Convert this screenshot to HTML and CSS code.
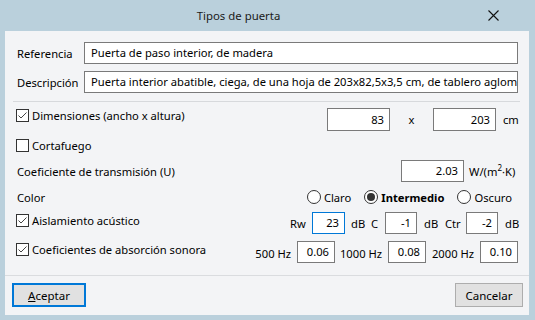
FILE: index.html
```html
<!DOCTYPE html>
<html lang="es">
<head>
  <meta charset="UTF-8" />
  <title>Tipos de puerta</title>
  <link rel="stylesheet" href="styles.css">
</head>
<body>
  <div class="window">
    <div class="titlebar">
      <div class="title">Tipos de puerta</div>
      <div class="close">
        <svg width="11" height="11" viewBox="0 0 11 11"><path d="M0.5 0.5L10.5 10.5M10.5 0.5L0.5 10.5" stroke="#111" stroke-width="1.1" fill="none"/></svg>
      </div>
    </div>

    <div class="client">
      <div class="body">
        <div class="row text-row">
          <span class="label">Referencia</span>
          <div class="field wide">Puerta de paso interior, de madera</div>
        </div>
        <div class="row text-row next">
          <span class="label">Descripción</span>
          <div class="field wide">Puerta interior abatible, ciega, de una hoja de 203x82,5x3,5 cm, de tablero aglomerado</div>
        </div>

        <div class="sep"></div>

        <div class="row dims">
          <label class="check lift-9">
            <span class="box"><svg width="11" height="11" viewBox="0 0 11 11"><path d="M1.5 5.5L4 8L9.5 2.5" stroke="#444" stroke-width="1" fill="none"/></svg></span>
            Dimensiones (ancho x altura)
          </label>
          <div class="group">
            <div class="field num w63">83</div>
            <span class="times">x</span>
            <div class="field num w63">203</div>
            <span class="unit">cm</span>
          </div>
        </div>

        <div class="row plain">
          <label class="check">
            <span class="box"></span>
            Cortafuego
          </label>
        </div>

        <div class="row trans">
          <span>Coeficiente de transmisión (U)</span>
          <div class="group">
            <div class="field num w63">2.03</div>
            <span class="unit-w">W/(m<sup>2</sup>·K)</span>
          </div>
        </div>

        <div class="row color">
          <span>Color</span>
          <div class="group radios">
            <span class="radio"><span class="dot"></span>Claro</span>
            <span class="radio on"><span class="dot"></span><b>Intermedio</b></span>
            <span class="radio"><span class="dot"></span>Oscuro</span>
          </div>
        </div>

        <div class="row acoustic">
          <label class="check lift-6">
            <span class="box"><svg width="11" height="11" viewBox="0 0 11 11"><path d="M1.5 5.5L4 8L9.5 2.5" stroke="#444" stroke-width="1" fill="none"/></svg></span>
            Aislamiento acústico
          </label>
          <div class="group">
            <span class="cell rw">Rw</span>
            <div class="field num w33 focus">23</div>
            <span class="cell db">dB</span>
            <span class="cell c">C</span>
            <div class="field num w32">-1</div>
            <span class="cell db2">dB</span>
            <span class="cell ctr">Ctr</span>
            <div class="field num w32">-2</div>
            <span class="cell db-last">dB</span>
          </div>
        </div>

        <div class="row absorb">
          <label class="check lift-5">
            <span class="box"><svg width="11" height="11" viewBox="0 0 11 11"><path d="M1.5 5.5L4 8L9.5 2.5" stroke="#444" stroke-width="1" fill="none"/></svg></span>
            Coeficientes de absorción sonora
          </label>
          <div class="group">
            <span class="hz hz500">500 Hz</span>
            <div class="field num w38">0.06</div>
            <span class="hz hz1000">1000 Hz</span>
            <div class="field num w38">0.08</div>
            <span class="hz hz2000">2000 Hz</span>
            <div class="field num w38">0.10</div>
          </div>
        </div>
      </div>

      <div class="footer">
        <button class="btn btn-default"><u>A</u>ceptar</button>
        <button class="btn btn-cancel">Cancelar</button>
      </div>
    </div>
  </div>
</body>
</html>
```

FILE: styles.css
```css
body {
  margin: 0;
  font-family: "Noto Sans", "Open Sans", sans-serif;
  font-size: 11.2px;
  color: #000;
  background: #fff;
}
.window {
  width: 535px;
  height: 320px;
  box-sizing: border-box;
  padding: 0 6px 5px 5px;
  background: #bad0dc;
  display: flex;
  flex-direction: column;
}
.titlebar {
  height: 31px;
  display: flex;
  align-items: center;
  margin-left: -5px;
  margin-right: -6px;
}
.title {
  flex: 1;
  text-align: center;
  color: #1a1a1a;
  font-size: 11.4px;
}
.close {
  width: 58px;
  display: flex;
  align-items: center;
  padding-left: 11px;
  box-sizing: border-box;
}
.client {
  flex: 1;
  background: #f3f4f6;
  display: flex;
  flex-direction: column;
}
.body {
  flex: 1;
  padding: 11px 11px 0 11px;
}
.row {
  display: flex;
  align-items: center;
  justify-content: space-between;
  white-space: nowrap;
}
.text-row {
  height: 22px;
  justify-content: flex-start;
}
.text-row.next {
  margin-top: 7px;
}
.label {
  width: 67px;
  margin-left: 1px;
}
.field {
  height: 22px;
  box-sizing: border-box;
  border: 1px solid #7a7a7a;
  background: #fff;
  line-height: 20px;
  overflow: hidden;
  white-space: nowrap;
}
.field.wide {
  flex: 1;
  padding-left: 6px;
}
.field.num {
  text-align: right;
  padding-right: 5px;
}
.field.focus {
  border-color: #0078d7;
}
.w63 { width: 63px; }
.w38 { width: 38px; }
.w33 { width: 33px; }
.w32 { width: 32px; }
.sep {
  height: 1px;
  background: #d7d9dc;
  margin: 8px -2px 0 -3px;
}
.group {
  display: flex;
  align-items: center;
}
.dims {
  margin-top: 6px;
  height: 23px;
}
.dims .field {
  height: 23px;
  line-height: 21px;
}
.plain {
  margin-top: 6px;
  height: 17px;
}
.trans {
  margin-top: 6px;
  height: 22px;
}
.trans span:first-child,
.color span:first-child {
  margin-left: 1px;
}
.color {
  margin-top: 6px;
  height: 18px;
}
.acoustic {
  margin-top: 6px;
  height: 22px;
}
.absorb {
  margin-top: 7px;
  height: 22px;
}
.check {
  display: flex;
  align-items: center;
}
.lift-9 { margin-bottom: 9px; }
.lift-6 { margin-bottom: 6px; }
.lift-5 { margin-bottom: 5px; }
.box {
  width: 13px;
  height: 13px;
  box-sizing: border-box;
  border: 1px solid #333;
  background: #fff;
  margin-right: 3px;
  display: flex;
}
.times {
  width: 43px;
  text-align: center;
}
.unit {
  width: 22px;
  padding-left: 7px;
  box-sizing: border-box;
}
.unit-w {
  width: 54px;
  padding-left: 5px;
  box-sizing: border-box;
}
.unit-w sup {
  font-size: 8px;
  line-height: 0;
}
.radios {
  margin-right: 6px;
}
.radio {
  display: flex;
  align-items: center;
}
.radio + .radio {
  margin-left: 12px;
}
.dot {
  width: 14px;
  height: 14px;
  box-sizing: border-box;
  border: 1px solid #333;
  border-radius: 50%;
  background: #fff;
  margin-right: 3px;
  display: flex;
  align-items: center;
  justify-content: center;
}
.radio.on .dot::after {
  content: "";
  width: 8px;
  height: 8px;
  border-radius: 50%;
  background: #333;
}
.cell {
  box-sizing: border-box;
}
.rw { width: 22px; }
.db { width: 26px; padding-left: 6px; }
.c { width: 14px; }
.db2 { width: 28px; padding-left: 7px; }
.ctr { width: 21px; }
.db-last { width: 20px; padding-left: 7px; }
.hz {
  text-align: right;
  padding-right: 6px;
  box-sizing: border-box;
  margin-top: 2px;
}
.hz500 { width: 47px; }
.hz1000 { width: 53px; }
.hz2000 { width: 54px; }
.footer {
  height: 40px;
  box-sizing: border-box;
  border-top: 1px solid #dadcdf;
  display: flex;
  align-items: flex-start;
  justify-content: space-between;
  padding: 7px 6px 0 7px;
}
.btn {
  height: 24px;
  font-family: inherit;
  font-size: 11.5px;
  color: #000;
  background: #e1e1e1;
  border: 1px solid #adadad;
  padding: 0;
}
.btn-default {
  width: 74px;
  border: 2px solid #0078d7;
}
.btn-cancel {
  width: 68px;
}
```
